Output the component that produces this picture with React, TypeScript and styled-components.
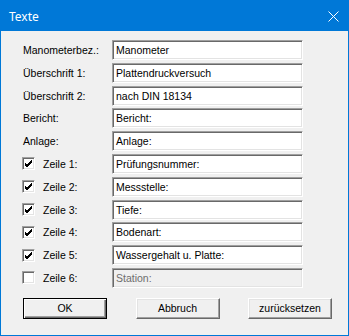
import React from "react";
import styled, { createGlobalStyle } from "styled-components";

const GlobalStyle = createGlobalStyle`
  html, body {
    margin: 0;
    padding: 0;
    background: #f0f0f0;
  }
  body {
    font-family: "Liberation Sans", Arial, sans-serif;
    font-size: 10.5px;
    color: #000;
  }
`;

const Window = styled.div`
  width: 349px;
  height: 336px;
  box-sizing: border-box;
  border: 1px solid #0078d7;
  background: #f0f0f0;
  display: flex;
  flex-direction: column;
`;

const TitleBar = styled.div`
  height: 30px;
  background: #0078d7;
  display: flex;
  align-items: center;
  justify-content: space-between;
  padding: 0 9px 0 8px;
  color: #fff;
  font-family: "Noto Sans", "Liberation Sans", sans-serif;
  font-size: 12px;
`;

const Body = styled.div`
  flex: 1;
  padding: 9px 0 0 21px;
  display: flex;
  flex-direction: column;
`;

const Rows = styled.div`
  display: flex;
  flex-direction: column;
  gap: 2.8px;
`;

const Row = styled.div`
  display: grid;
  grid-template-columns: 90px 191px;
  height: 20px;
  align-items: center;
`;

const Label = styled.label`
  display: flex;
  align-items: center;
  gap: 8px;
  line-height: 20px;
  white-space: nowrap;
  padding-left: 1px;
`;

const Box = styled.span<{ $checked: boolean }>`
  width: 13px;
  height: 13px;
  box-sizing: border-box;
  background: #fff;
  border: 1px solid;
  border-color: #a0a0a0 #fff #fff #a0a0a0;
  box-shadow: inset 1px 1px #696969, inset -1px -1px #e3e3e3;
  display: flex;
  align-items: center;
  justify-content: center;
  margin-left: -1px;
`;

const Field = styled.div<{ $disabled?: boolean }>`
  height: 20px;
  box-sizing: border-box;
  border: 1px solid;
  border-color: #a0a0a0 #fff #fff #a0a0a0;
  box-shadow: inset 1px 1px #696969, inset -1px -1px #e3e3e3;
  background: ${(p) => (p.$disabled ? "#f0f0f0" : "#fff")};
  color: ${(p) => (p.$disabled ? "#6d6d6d" : "#000")};
  padding: 0 3px;
  line-height: 18px;
  white-space: nowrap;
  overflow: hidden;
`;

const Buttons = styled.div`
  display: flex;
  margin-top: 10px;
  padding-left: 1px;
  width: 309px;
  justify-content: space-between;
`;

const Button = styled.div<{ $default?: boolean }>`
  width: 84px;
  height: 21px;
  box-sizing: border-box;
  display: flex;
  align-items: center;
  justify-content: center;
  background: #f0f0f0;
  border: 1px solid;
  border-color: ${(p) =>
    p.$default ? "#000" : "#fff #696969 #696969 #fff"};
  box-shadow: ${(p) =>
    p.$default
      ? "inset 1px 1px #fff, inset -1px -1px #696969, inset -2px -2px #a0a0a0"
      : "inset -1px -1px #a0a0a0, inset 1px 1px #e3e3e3"};
`;

const Check = () => (
  <svg width="9" height="9" viewBox="0 0 9 9">
    <path
      d="M1 4 L3 6 L8 1 M1 5 L3 7 L8 2 M1 6 L3 8 L8 3"
      stroke="#000"
      strokeWidth="1"
      fill="none"
      shapeRendering="crispEdges"
    />
  </svg>
);

const CloseIcon = () => (
  <svg width="11" height="11" viewBox="0 0 11 11">
    <path d="M0.5 0.5 L10.5 10.5 M10.5 0.5 L0.5 10.5" stroke="#fff" strokeWidth="1" />
  </svg>
);

const plain = [
  ["Manometerbez.:", "Manometer"],
  ["Überschrift 1:", "Plattendruckversuch"],
  ["Überschrift 2:", "nach DIN 18134"],
  ["Bericht:", "Bericht:"],
  ["Anlage:", "Anlage:"],
];

const lines = [
  { label: "Zeile 1:", value: "Prüfungsnummer:", on: true },
  { label: "Zeile 2:", value: "Messstelle:", on: true },
  { label: "Zeile 3:", value: "Tiefe:", on: true },
  { label: "Zeile 4:", value: "Bodenart:", on: true },
  { label: "Zeile 5:", value: "Wassergehalt u. Platte:", on: true },
  { label: "Zeile 6:", value: "Station:", on: false },
];

export default function App() {
  return (
    <>
      <GlobalStyle />
      <Window>
        <TitleBar>
          <span>Texte</span>
          <CloseIcon />
        </TitleBar>
        <Body>
          <Rows>
            {plain.map(([l, v]) => (
              <Row key={l}>
                <Label>{l}</Label>
                <Field>{v}</Field>
              </Row>
            ))}
            {lines.map((z) => (
              <Row key={z.label}>
                <Label>
                  <Box $checked={z.on}>{z.on && <Check />}</Box>
                  {z.label}
                </Label>
                <Field $disabled={!z.on}>{z.value}</Field>
              </Row>
            ))}
          </Rows>
          <Buttons>
            <Button $default>OK</Button>
            <Button>Abbruch</Button>
            <Button>zurücksetzen</Button>
          </Buttons>
        </Body>
      </Window>
    </>
  );
}
